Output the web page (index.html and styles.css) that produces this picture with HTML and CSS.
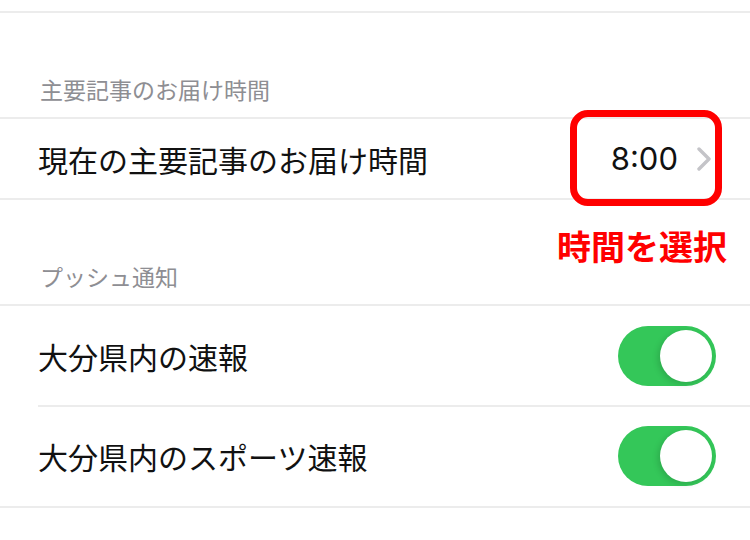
FILE: index.html
```html
<!DOCTYPE html>
<html lang="ja">
<head>
    <meta charset="UTF-8">
    <meta name="viewport" content="width=device-width, initial-scale=1.0">
    <title>設定</title>
    <link rel="stylesheet" href="styles.css">
</head>
<body>
    <div class="top-rule"></div>

    <div class="section-header">主要記事のお届け時間</div>
    <div class="group">
        <div class="row row-short">
            <span class="label">現在の主要記事のお届け時間</span>
            <span class="value">8:00</span>
            <svg class="chevron" width="14" height="24" viewBox="0 0 14 24">
                <polyline points="2,2 12,12 2,22" fill="none" stroke="#c4c4c8" stroke-width="3.4" stroke-linecap="round" stroke-linejoin="round"/>
            </svg>
            <div class="highlight"></div>
        </div>
    </div>

    <div class="section-header with-note">
        プッシュ通知
        <span class="note">時間を選択</span>
    </div>
    <div class="group">
        <div class="row">
            <span class="label">大分県内の速報</span>
            <div class="toggle on"><div class="knob"></div></div>
        </div>
        <div class="row inset">
            <span class="label">大分県内のスポーツ速報</span>
            <div class="toggle on"><div class="knob"></div></div>
        </div>
    </div>
</body>
</html>
```

FILE: styles.css
```css
body, html {
    margin: 0;
    padding: 0;
    background-color: #ffffff;
    font-family: "Noto Sans CJK JP", "Noto Sans", sans-serif;
}

.top-rule {
    height: 11px;
    border-bottom: 2px solid #ececec;
}

.section-header {
    position: relative;
    height: 104px;
    box-sizing: border-box;
    padding: 0 0 12px 40px;
    display: flex;
    align-items: flex-end;
    font-size: 23px;
    line-height: 1.3;
    color: #8e8e93;
}

.note {
    position: absolute;
    top: 26px;
    right: 23px;
    font-size: 34px;
    line-height: 1.2;
    font-weight: bold;
    color: #ff0000;
}

.group {
    border-top: 2px solid #ececec;
    border-bottom: 2px solid #ececec;
}

.row {
    position: relative;
    height: 100px;
    display: flex;
    align-items: center;
    padding: 0 34px 0 38px;
}

.row-short {
    height: 79px;
    padding-right: 39px;
}

.row.inset::before {
    content: "";
    position: absolute;
    top: -1px;
    left: 38px;
    right: 0;
    border-top: 2px solid #ececec;
}

.label {
    flex: 1;
    font-size: 30px;
    color: #111111;
}

.value {
    font-family: Inter, "Liberation Sans", sans-serif;
    font-size: 31px;
    color: #111111;
    margin-right: 19px;
}

.chevron {
    display: block;
}

.highlight {
    position: absolute;
    top: -9px;
    right: 28px;
    width: 152px;
    height: 96px;
    box-sizing: border-box;
    border: 7px solid #ff0000;
    border-radius: 18px;
}

.toggle {
    position: relative;
    width: 98px;
    height: 60px;
    border-radius: 30px;
    background-color: #e5e5ea;
}

.toggle.on {
    background-color: #34c759;
}

.toggle .knob {
    position: absolute;
    top: 4px;
    right: 4px;
    width: 52px;
    height: 52px;
    border-radius: 50%;
    background-color: #ffffff;
    box-shadow: -2px 2px 6px rgba(0, 0, 0, 0.15);
}
```
